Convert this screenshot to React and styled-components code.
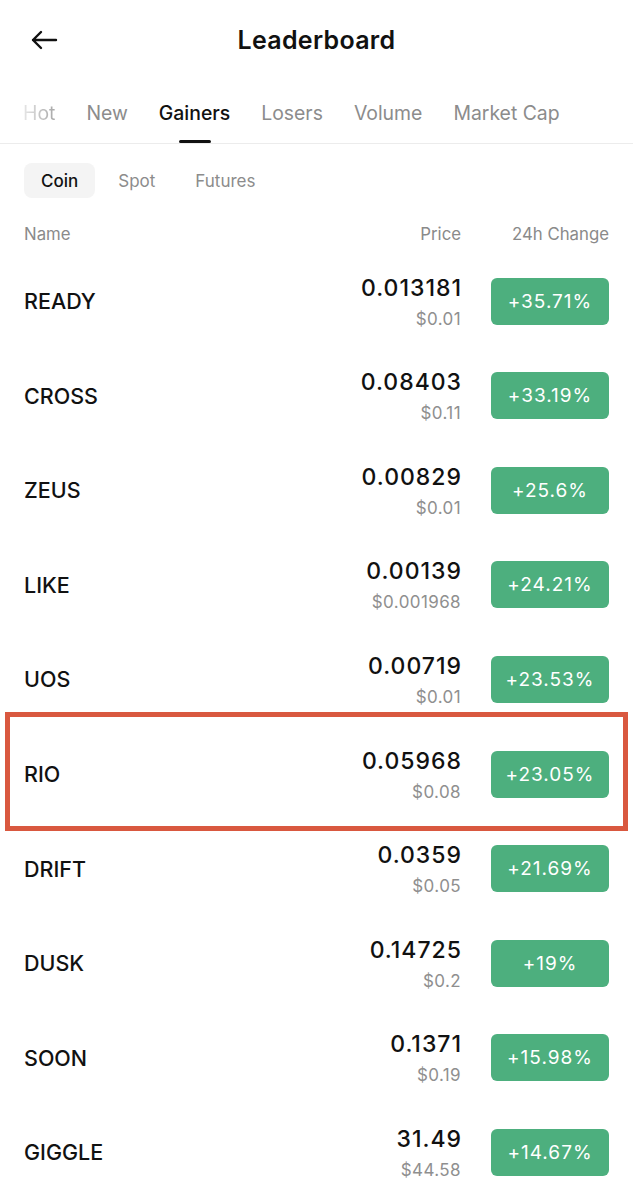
import React from "react";
import styled, { createGlobalStyle } from "styled-components";

const Global = createGlobalStyle`
  html, body { margin: 0; padding: 0; background: #fff; }
  body { font-family: Inter, "Noto Sans", sans-serif; color: #111; -webkit-font-smoothing: antialiased; }
  * { box-sizing: border-box; }
`;

const Page = styled.div`
  width: 633px;
  height: 1199px;
  overflow: hidden;
  background: #fff;
`;

const Header = styled.header`
  height: 80px;
  display: grid;
  grid-template-columns: 80px 1fr 80px;
  align-items: center;
`;

const Back = styled.button`
  border: 0;
  background: none;
  padding: 0 0 0 30px;
  display: flex;
  align-items: center;
  height: 40px;
  cursor: pointer;
`;

const Title = styled.h1`
  margin: 0;
  text-align: center;
  font-size: 25px;
  font-weight: 600;
  letter-spacing: 0.3px;
  color: #111;
`;

const Tabs = styled.nav`
  height: 64px;
  display: flex;
  gap: 31px;
  padding-left: 23px;
  border-bottom: 1px solid #ececec;
  white-space: nowrap;
  overflow: hidden;
`;

const Tab = styled.div`
  position: relative;
  display: flex;
  align-items: center;
  height: 100%;
  padding-top: 3px;
  font-size: 19.4px;
  font-weight: ${(p) => (p.$active ? 500 : 400)};
  color: ${(p) => (p.$active ? "#111" : "#8c8c8c")};
  ${(p) =>
    p.$faded &&
    `
    background: linear-gradient(90deg, #e6e6e6 0%, #a8a8a8 100%);
    -webkit-background-clip: text;
    background-clip: text;
    color: transparent;
  `}
  &::after {
    content: "";
    display: ${(p) => (p.$active ? "block" : "none")};
    position: absolute;
    left: 50%;
    bottom: 0;
    width: 32px;
    height: 3px;
    margin-left: -16px;
    background: #111;
    border-radius: 2px;
  }
`;

const SubTabs = styled.div`
  display: flex;
  gap: 6px;
  padding: 19px 24px 0;
`;

const SubTab = styled.div`
  height: 35px;
  padding: 0 17px;
  display: flex;
  align-items: center;
  border-radius: 8px;
  font-size: 17px;
  background: ${(p) => (p.$active ? "#f4f4f4" : "transparent")};
  color: ${(p) => (p.$active ? "#111" : "#8c8c8c")};
  font-weight: ${(p) => (p.$active ? 500 : 400)};
`;

const ColHead = styled.div`
  display: grid;
  grid-template-columns: 1fr 180px 148px;
  padding: 26px 24px 10px;
  font-size: 16.8px;
  line-height: 20px;
  color: #8a8a8a;
`;

const HeadCell = styled.div`
  text-align: ${(p) => p.$align || "left"};
`;

const Row = styled.div`
  position: relative;
  height: 94.55px;
  display: grid;
  grid-template-columns: 1fr 180px 148px;
  align-items: center;
  padding: 0 24px;
  ${(p) =>
    p.$highlight &&
    `
    &::after {
      content: "";
      position: absolute;
      left: 5px;
      right: 5px;
      top: -15px;
      bottom: -10px;
      border: 5px solid #d9583f;
      pointer-events: none;
    }
  `}
`;

const Name = styled.div`
  font-size: 21.5px;
  font-weight: 500;
  color: #111;
`;

const PriceBlock = styled.div`
  display: flex;
  flex-direction: column;
  align-items: flex-end;
  gap: 6px;
  margin-top: 1px;
`;

const Price = styled.div`
  font-size: 23px;
  line-height: 28px;
  font-weight: 500;
  letter-spacing: 1px;
  margin-right: -1px;
  color: #111;
`;

const Usd = styled.div`
  font-size: 17px;
  line-height: 22px;
  letter-spacing: 0.4px;
  color: #8f8f8f;
`;

const Badge = styled.div`
  justify-self: end;
  width: 118px;
  height: 47px;
  border-radius: 6px;
  background: #4daf7e;
  color: #fff;
  font-size: 19px;
  letter-spacing: 1px;
  display: flex;
  align-items: center;
  justify-content: center;
`;

const data = [
  ["READY", "0.013181", "$0.01", "+35.71%"],
  ["CROSS", "0.08403", "$0.11", "+33.19%"],
  ["ZEUS", "0.00829", "$0.01", "+25.6%"],
  ["LIKE", "0.00139", "$0.001968", "+24.21%"],
  ["UOS", "0.00719", "$0.01", "+23.53%"],
  ["RIO", "0.05968", "$0.08", "+23.05%"],
  ["DRIFT", "0.0359", "$0.05", "+21.69%"],
  ["DUSK", "0.14725", "$0.2", "+19%"],
  ["SOON", "0.1371", "$0.19", "+15.98%"],
  ["GIGGLE", "31.49", "$44.58", "+14.67%"],
];

export default function App() {
  return (
    <Page>
      <Global />
      <Header>
        <Back aria-label="Back">
          <svg width="28" height="20" viewBox="0 0 28 20" fill="none">
            <path d="M26 10H3M11 2L3 10l8 8" stroke="#111" strokeWidth="2.4" strokeLinecap="round" strokeLinejoin="round" />
          </svg>
        </Back>
        <Title>Leaderboard</Title>
        <div />
      </Header>
      <Tabs>
        <Tab $faded>Hot</Tab>
        <Tab>New</Tab>
        <Tab $active>Gainers</Tab>
        <Tab>Losers</Tab>
        <Tab>Volume</Tab>
        <Tab>Market Cap</Tab>
      </Tabs>
      <SubTabs>
        <SubTab $active>Coin</SubTab>
        <SubTab>Spot</SubTab>
        <SubTab>Futures</SubTab>
      </SubTabs>
      <ColHead>
        <HeadCell>Name</HeadCell>
        <HeadCell $align="right">Price</HeadCell>
        <HeadCell $align="right">24h Change</HeadCell>
      </ColHead>
      {data.map(([n, p, u, c]) => (
        <Row key={n} $highlight={n === "RIO"}>
          <Name>{n}</Name>
          <PriceBlock>
            <Price>{p}</Price>
            <Usd>{u}</Usd>
          </PriceBlock>
          <Badge>{c}</Badge>
        </Row>
      ))}
    </Page>
  );
}
